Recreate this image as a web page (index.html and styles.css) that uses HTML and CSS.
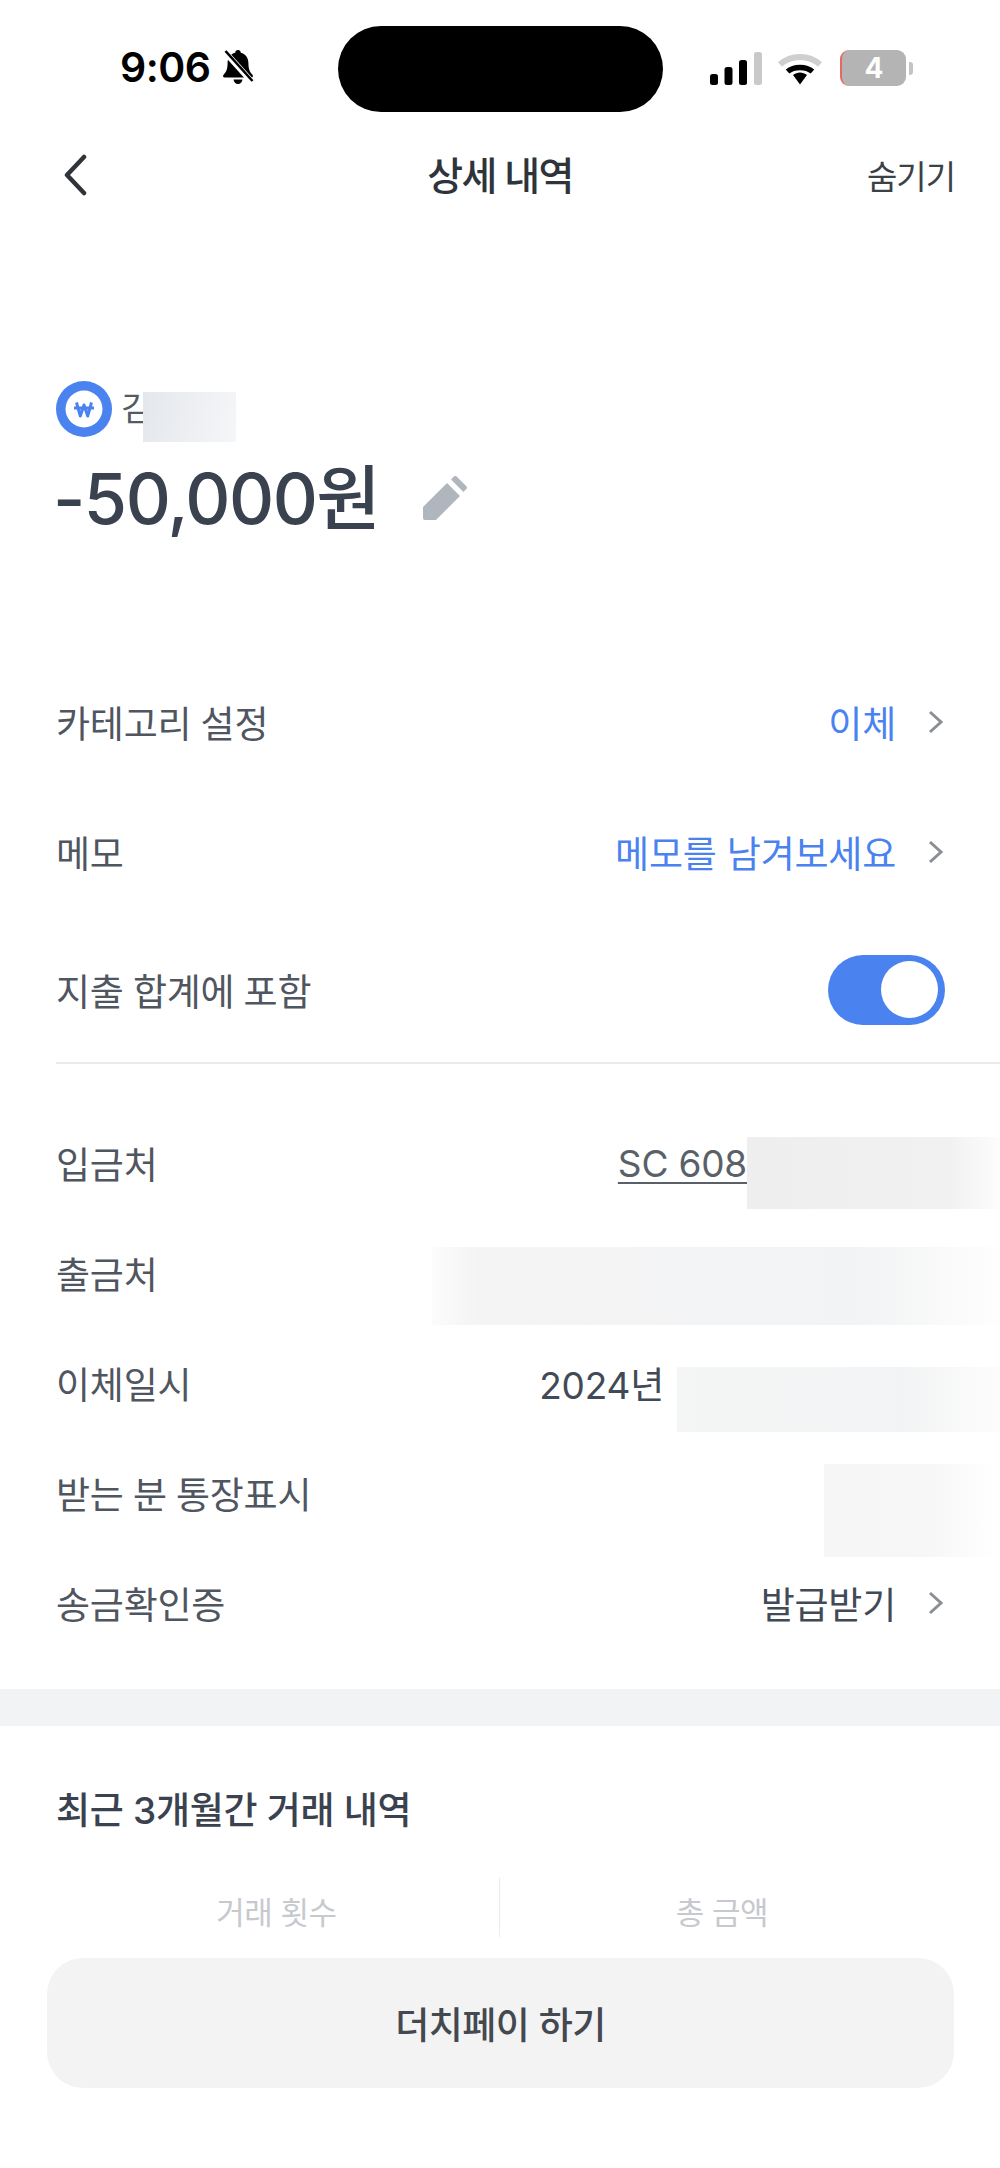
FILE: index.html
```html
<!DOCTYPE html>
<html lang="ko">
<head>
<meta charset="utf-8">
<title>상세 내역</title>
<link rel="stylesheet" href="styles.css">
</head>
<body>
<main class="page">
  <header class="status">
    <div class="status-left">
      <span class="time">9:06</span>
      <svg class="bell" viewBox="0 0 34 36" width="34" height="36">
        <path d="M17 1c1.700 0 2.800 1.200 2.800 2.700 5 1.200 7.600 5.300 7.600 10.300 0 6 1.400 9 4.200 12 .8 1 .2 2.500-1.200 2.500H3.600c-1.400 0-2-1.500-1.200-2.500 2.800-3 4.200-6 4.200-12 0-5 2.600-9.100 7.600-10.300C14.200 2.200 15.300 1 17 1z" fill="#000"/>
        <path d="M12.500 30.500h9c-.3 2.700-2.200 4.500-4.500 4.500s-4.200-1.800-4.500-4.500z" fill="#000"/>
        <path d="M3 2l28 31" stroke="#fff" stroke-width="6"/>
        <path d="M4.500 2l27 30" stroke="#000" stroke-width="2.600"/>
      </svg>
    </div>
    <div class="island"></div>
    <div class="status-right">
      <svg class="signal" viewBox="0 0 52 33" width="52" height="33">
        <rect x="0" y="22" width="8" height="11" rx="2.500" fill="#000"/>
        <rect x="14.500" y="15" width="8" height="18" rx="2.500" fill="#000"/>
        <rect x="29" y="8" width="8" height="25" rx="2.500" fill="#000"/>
        <rect x="44" y="0" width="8" height="33" rx="2.500" fill="#c9c9c9"/>
      </svg>
      <svg class="wifi" viewBox="0 0 44 33" width="44" height="33">
        <path d="M2 12.500C13 2.500 31 2.500 42 12.500" fill="none" stroke="#cfcfcf" stroke-width="6"/>
        <path d="M9.500 19.500C16 14 28 14 34.500 19.500" fill="none" stroke="#000" stroke-width="5.500"/>
        <path d="M15 23c4-3.500 10-3.500 14 0l-7 9.500z" fill="#000"/>
      </svg>
      <div class="battery"><span class="battery-level">4</span></div>
      <span class="battery-nub"></span>
    </div>
  </header>

  <nav class="nav">
    <svg class="back" viewBox="0 0 24 42" width="24" height="42">
      <path d="M21 3L4 21l17 18" fill="none" stroke="#2f343b" stroke-width="4.500" stroke-linecap="round" stroke-linejoin="round"/>
    </svg>
    <h1 class="nav-title">상세 내역</h1>
    <span class="nav-action">숨기기</span>
  </nav>

  <section class="hero">
    <div class="payee">
      <svg class="won-icon" viewBox="0 0 56 56" width="56" height="56">
        <circle cx="28" cy="28" r="28" fill="#4a82ef"/>
        <circle cx="28" cy="28" r="18.500" fill="#fff"/>
        <path d="M20.500 21.500l3.800 13.500 3.700-11 3.700 11 3.800-13.500M18 27h20" fill="none" stroke="#4a82ef" stroke-width="3" stroke-linejoin="round"/>
      </svg>
      <span class="payee-name">김</span>
      <span class="mask mask-name"></span>
    </div>
    <div class="amount-row">
      <span class="amount">-50,000원</span>
      <svg class="pencil" viewBox="0 0 44 44" width="44" height="44">
        <path d="M0 31L24 7l13 13-24 24H2a2 2 0 0 1-2-2z" fill="#b0b6be"/>
        <path d="M28 3.500l3-3a2 2 0 0 1 2.600 0l9.800 9.800a2 2 0 0 1 0 2.600l-3 3z" fill="#b0b6be"/>
      </svg>
    </div>
  </section>

  <section class="settings">
    <div class="row setting">
      <span class="label">카테고리 설정</span>
      <span class="link">이체</span>
      <svg class="chevron" viewBox="0 0 16 24" width="16" height="24"><path d="M2 2l11 10L2 22" fill="none" stroke="#8b8f95" stroke-width="3"/></svg>
    </div>
    <div class="row setting">
      <span class="label">메모</span>
      <span class="link">메모를 남겨보세요</span>
      <svg class="chevron" viewBox="0 0 16 24" width="16" height="24"><path d="M2 2l11 10L2 22" fill="none" stroke="#8b8f95" stroke-width="3"/></svg>
    </div>
    <div class="row setting setting-toggle">
      <span class="label">지출 합계에 포함</span>
      <span class="toggle"><span class="knob"></span></span>
    </div>
  </section>

  <section class="details">
    <div class="row detail">
      <span class="label">입금처</span>
      <span class="value value-account">SC 608</span>
      <span class="mask mask-account"></span>
    </div>
    <div class="row detail">
      <span class="label">출금처</span>
      <span class="mask mask-from"></span>
    </div>
    <div class="row detail">
      <span class="label">이체일시</span>
      <span class="value value-date">2024년</span>
      <span class="mask mask-date"></span>
    </div>
    <div class="row detail">
      <span class="label">받는 분 통장표시</span>
      <span class="mask mask-memo"></span>
    </div>
    <div class="row detail">
      <span class="label">송금확인증</span>
      <span class="value">발급받기</span>
      <svg class="chevron" viewBox="0 0 16 24" width="16" height="24"><path d="M2 2l11 10L2 22" fill="none" stroke="#8b8f95" stroke-width="3"/></svg>
    </div>
  </section>

  <div class="band"></div>

  <section class="recent">
    <h2 class="recent-title">최근 3개월간 거래 내역</h2>
    <div class="stats">
      <div class="stat">거래 횟수</div>
      <div class="stat">총 금액</div>
    </div>
  </section>

  <footer class="bottom">
    <button class="dutch">더치페이 하기</button>
  </footer>
</main>
</body>
</html>
```

FILE: styles.css
```css
* { box-sizing: border-box; }

html, body { margin: 0; padding: 0; background: #fff; }

.page {
  position: relative;
  width: 1000px;
  height: 2168px;
  overflow: hidden;
  background: #fff;
  font-family: Inter, "Noto Sans CJK KR", "Liberation Sans", sans-serif;
  color: #39424e;
}

/* Status bar */
.status {
  display: flex;
  align-items: center;
  height: 134px;
}
.status-left {
  display: flex;
  align-items: center;
  gap: 10px;
  width: 338px;
  padding-left: 120px;
}
.time {
  font-size: 41px;
  font-weight: 600;
  line-height: 48px;
  color: #000;
  letter-spacing: -0.5px;
}
.bell { flex: none; }
.island {
  flex: none;
  width: 325px;
  height: 86px;
  margin-top: 3px;
  border-radius: 43px;
  background: #000;
}
.status-right {
  display: flex;
  align-items: center;
  padding: 2px 0 0 47px;
}
.signal { flex: none; margin-right: 16px; }
.wifi { flex: none; margin-right: 18px; }
.battery {
  display: flex;
  align-items: center;
  justify-content: center;
  width: 66px;
  height: 36px;
  border-radius: 9px;
  border-left: 2px solid #e36a62;
  background: #b4b4b4;
}
.battery-level {
  font-size: 28px;
  font-weight: 700;
  line-height: 36px;
  color: #fff;
}
.battery-nub {
  width: 4px;
  height: 13px;
  margin-left: 3px;
  border-radius: 0 3px 3px 0;
  background: #c4c4c4;
}

/* Navigation */
.nav {
  display: grid;
  grid-template-columns: 1fr auto 1fr;
  align-items: center;
  height: 82px;
  padding: 0 45px;
}
.back { display: block; margin-left: 18px; }
.nav-title {
  margin: 2px 0 0;
  font-size: 39px;
  font-weight: 500;
  line-height: 50px;
  color: #2f343b;
  letter-spacing: -1.7px;
}
.nav-action {
  justify-self: end;
  margin-top: 3px;
  font-size: 33px;
  line-height: 50px;
  color: #3c4047;
  letter-spacing: -1px;
}

/* Hero */
.hero { padding: 165px 0 0 56px; }
.payee {
  position: relative;
  display: flex;
  align-items: center;
  gap: 9px;
  height: 56px;
}
.won-icon { flex: none; }
.payee-name {
  font-size: 34px;
  line-height: 40px;
  color: #555b64;
}
.amount-row {
  display: flex;
  align-items: center;
  height: 80px;
  margin-top: 22px;
}
.amount {
  margin-left: -3px;
  font-size: 70px;
  font-weight: 500;
  line-height: 80px;
  color: #39424e;
  letter-spacing: -1.5px;
}
.pencil { flex: none; margin: 0 0 2px 44px; }

/* Rows */
.row {
  position: relative;
  display: flex;
  align-items: center;
  padding: 0 56px;
}
.label {
  margin-right: auto;
  font-size: 37px;
  color: #50565f;
  letter-spacing: -0.2px;
  word-spacing: -1px;
}
.link {
  font-size: 37px;
  color: #4a82ef;
  letter-spacing: -0.2px;
}
.value {
  font-size: 37px;
  color: #414a56;
  letter-spacing: -0.2px;
}
.chevron { flex: none; margin-left: 32px; }

.settings { margin-top: 118px; }
.setting { height: 130px; }
.setting-toggle { height: 145px; }
.toggle {
  display: flex;
  justify-content: flex-end;
  align-items: center;
  width: 117px;
  height: 70px;
  margin-right: -1px;
  padding-right: 7px;
  border-radius: 35px;
  background: #4a82ef;
}
.knob {
  width: 57px;
  height: 57px;
  border-radius: 50%;
  background: #fff;
}

.details {
  margin-left: 56px;
  padding: 44px 0 31px;
  border-top: 2px solid #e8eaee;
}
.detail { height: 110px; padding-left: 0; }
.value-account {
  margin-right: 197px;
  color: #5a6068;
  text-decoration: underline;
  text-underline-offset: 5px;
  text-decoration-thickness: 2px;
}
.value-date { margin-right: 280px; }

/* Redaction patches lying over the text */
.mask { position: absolute; display: block; }
.mask-name {
  left: 87px;
  top: 11px;
  width: 93px;
  height: 50px;
  background: linear-gradient(100deg, #e4e7ec, #f5f6f8);
}
.mask-account {
  right: 0;
  top: 29px;
  width: 253px;
  height: 72px;
  background: linear-gradient(90deg, #eeeeee, #f1f1f1 80%, #fdfdfd);
}
.mask-from {
  right: 0;
  top: 29px;
  width: 568px;
  height: 78px;
  background: linear-gradient(90deg, #fcfcfc, #f4f4f5 8%, #f2f3f4 75%, #fefefe);
}
.mask-date {
  right: 0;
  top: 39px;
  width: 323px;
  height: 65px;
  background: linear-gradient(90deg, #f4f5f5, #f2f3f4 70%, #fdfdfd);
}
.mask-memo {
  right: 0;
  top: 26px;
  width: 176px;
  height: 93px;
  background: linear-gradient(90deg, #f6f6f6, #f7f7f7 60%, #ffffff);
}

/* Lower part */
.band { height: 37px; background: #f2f3f5; }
.recent { padding: 60px 0 0; }
.recent-title {
  margin: 0 0 0 56px;
  font-size: 37px;
  font-weight: 500;
  line-height: 50px;
  color: #39424e;
  letter-spacing: -0.3px;
}
.stats {
  display: grid;
  grid-template-columns: 500px 500px;
  margin-top: 42px;
  height: 60px;
}
.stat {
  padding: 12px 0 0 0;
  font-size: 31px;
  line-height: 46px;
  color: #c6c9ce;
  text-align: center;
  letter-spacing: -0.5px;
}
.stat:first-child {
  padding-left: 54px;
  border-right: 1px solid #e9eaec;
}
.stat:last-child { padding-right: 56px; }

.bottom {
  position: absolute;
  left: 0;
  right: 0;
  bottom: 0;
  height: 240px;
  padding: 30px 46px 0 47px;
  background: linear-gradient(180deg, rgba(255,255,255,0), #fff 30px);
}
.dutch {
  display: block;
  width: 100%;
  height: 130px;
  border: 0;
  border-radius: 36px;
  background: #f3f3f4;
  font-family: inherit;
  font-size: 37px;
  font-weight: 500;
  color: #44484f;
  letter-spacing: -0.5px;
}
```
